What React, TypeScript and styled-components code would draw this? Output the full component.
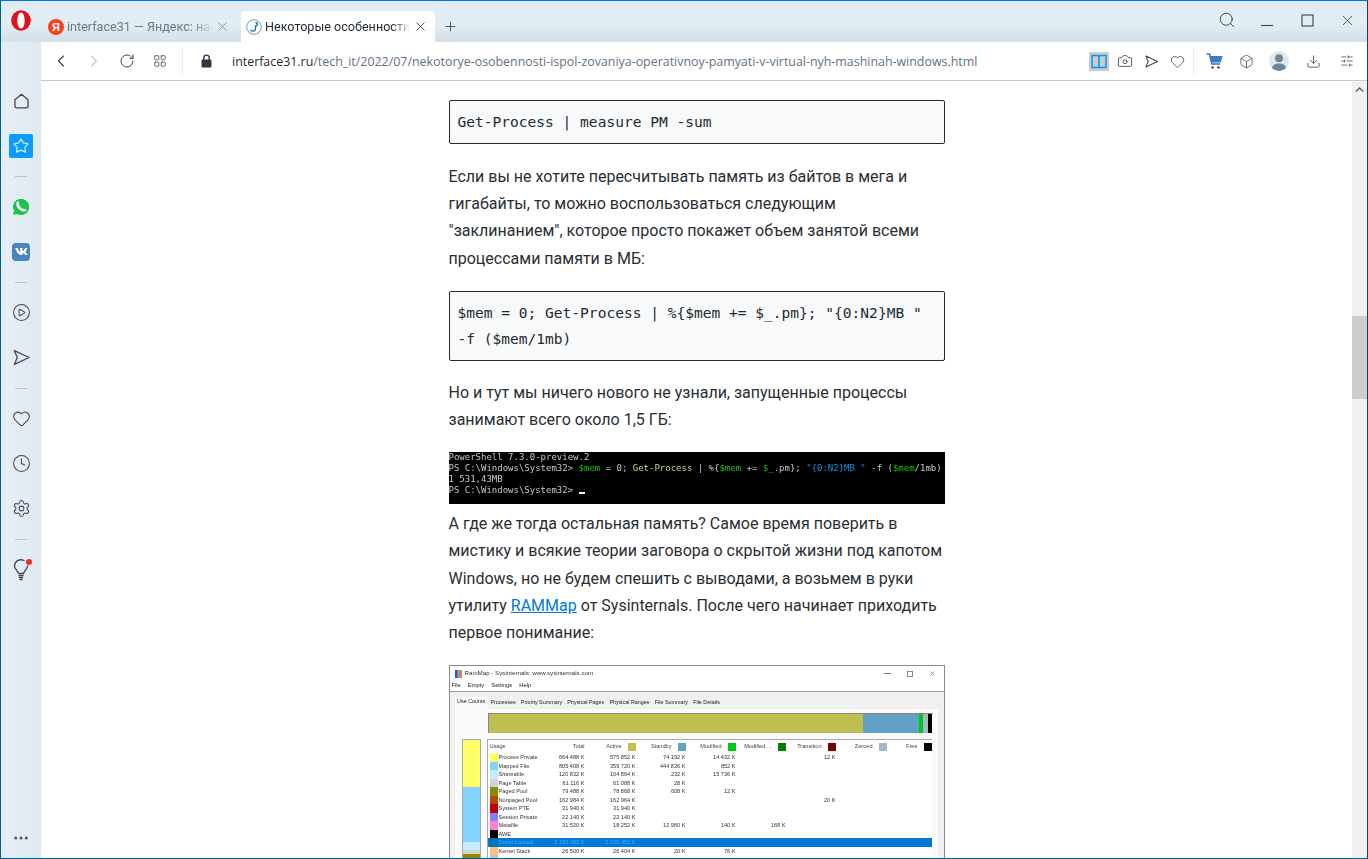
import React from 'react';
import styled, { createGlobalStyle } from 'styled-components';
import { ChevronLeft, ChevronRight, RotateCw, LayoutGrid, Camera, Heart, Box, Download, SlidersHorizontal, Search, X, Plus, Clock, Settings, CirclePlay, ChevronUp, MoreHorizontal } from 'lucide-react';
import { FaVk } from 'react-icons/fa';

const Global = createGlobalStyle`
  html, body { margin: 0; padding: 0; height: 100%; overflow: hidden; background: #fff; }
  * { box-sizing: border-box; }
`;

const Frame = styled.div`
  width: 1368px; height: 859px;
  display: flex; flex-direction: column;
  border: 1px solid #00628a; border-top: 1px solid #0078d7; border-right-color: #004a70;
  font-family: "Open Sans", "Noto Sans", sans-serif;
  background: #e3edf4;
  overflow: hidden;
`;
const TitleBar = styled.div`
  height: 41px; flex: none; display: flex; align-items: flex-end;
  background: linear-gradient(#dfeaf3, #e3edf4 55%, #d3e0ea);
`;
const LogoCell = styled.div`
  width: 44px; height: 41px; flex: none; display: flex; justify-content: center; padding: 9px 4px 0 0;
`;
const Tab = styled.div<{ $active?: boolean }>`
  width: ${p => (p.$active ? 194 : 192)}px; height: 31px; flex: none;
  margin-right: 4px; padding: 0 7px 0 ${p => (p.$active ? 5 : 3)}px;
  display: flex; align-items: center; gap: 3px;
  background: ${p => (p.$active ? '#fff' : 'transparent')};
  border-radius: 3px 3px 0 0;
  color: ${p => (p.$active ? '#1f2a35' : '#6c7a86')};
  font-family: Roboto, "Open Sans", sans-serif;
  font-size: 12.6px;
`;
const TabLabel = styled.span`
  flex: 1; white-space: nowrap; overflow: hidden;
  mask-image: linear-gradient(90deg, #000 88%, transparent);
`;
const TabClose = styled(X)<{ $active?: boolean }>`
  flex: none; color: ${p => (p.$active ? '#3c4650' : '#7d8a95')};
`;
const NewTab = styled.div`
  width: 26px; height: 31px; display: flex; align-items: center; justify-content: center; color: #333e48; margin-left: -2px;
`;
const WindowControls = styled.div`
  margin-left: auto; display: flex; height: 41px;
`;
const WindowControl = styled.div`
  width: 40px; display: flex; align-items: center; justify-content: center; color: #3a444e; padding-bottom: 3px;
`;
const Body = styled.div`
  flex: 1; min-height: 0; display: flex;
`;
const Sidebar = styled.nav`
  width: 40px; flex: none; display: flex; flex-direction: column; align-items: center;
  padding-top: 36px; color: #3e4a55; background: linear-gradient(90deg, #e6eff6, #dfe9f1);
`;
const SideItem = styled.div`
  height: 45px; flex: none; width: 100%; display: flex; align-items: center; justify-content: center; position: relative;
`;
const SideRule = styled.div<{ $h: number }>`
  width: 12px; height: ${p => p.$h}px; flex: none; display: flex; align-items: center;
  &::before { content: ""; width: 100%; height: 1px; background: #b4c4d0; }
`;
const StarTile = styled.div`
  width: 24px; height: 24px; border-radius: 2px; background: #0a9cff; display: flex; align-items: center; justify-content: center;
`;
const VkTile = styled.div`
  width: 18px; height: 18px; border-radius: 4px; background: #4a86bb; color: #fff; display: flex; align-items: center; justify-content: center;
`;
const RedDot = styled.span`
  position: absolute; top: 12px; left: 25px; width: 6px; height: 6px; border-radius: 50%; background: #f5282d;
`;
const SideFoot = styled.div`
  margin-top: auto; height: 40px; display: flex; align-items: center; color: #4b5763;
`;
const Main = styled.div`
  flex: 1; min-width: 0; display: flex; flex-direction: column;
`;
const AddressBar = styled.div`
  height: 39px; flex: none; display: flex; align-items: center; background: #fff;
  border-bottom: 1px solid #b9ccd9; padding: 0 4px 0 3px;
`;
const BarIcon = styled.div<{ $w?: number; $muted?: boolean }>`
  width: ${p => p.$w ?? 33}px; height: 30px; flex: none; display: flex; align-items: center; justify-content: center;
  color: ${p => (p.$muted ? '#c3c9ce' : '#3b4650')};
`;
const BarRule = styled.div`
  width: 1px; height: 28px; background: #e6ebef; flex: none; margin: 0 6px;
`;
const ToolRule = styled(BarRule)`
  margin: 0 4px 0 3px;
`;
const Url = styled.div`
  font-size: 12.42px; white-space: nowrap; color: #5f7385; margin-left: 8px;
  b { font-weight: 400; color: #1f2a35; }
`;
const RightTools = styled.div`
  margin-left: auto; display: flex; align-items: center;
`;
const ReaderButton = styled.div`
  width: 20px; height: 19px; background: #ccc; display: flex; align-items: center; justify-content: center; color: #0095ff; margin-right: 3px;
`;
const Viewport = styled.div`
  flex: 1; min-height: 0; display: flex; background: #fff;
`;
const PageArea = styled.div`
  flex: 1; min-width: 0; overflow: hidden; display: flex; justify-content: center; padding-top: 19px;
`;
const Article = styled.article`
  width: 496px; flex: none; color: #2a2e33;
  font-family: Roboto, "Liberation Sans", sans-serif; font-size: 16px; line-height: 27.2px;
`;
const Code = styled.pre<{ $gap?: number }>`
  margin: 0 0 ${p => p.$gap ?? 19}px; padding: 8px; background: #f8f9fa;
  border: 1px solid #2a2a2a; border-radius: 2px;
  font-family: "DejaVu Sans Mono", monospace; font-size: 14.55px; line-height: 26px; color: #24292e;
  white-space: pre-wrap;
`;
const Para = styled.p<{ $gap?: number }>`
  margin: 0 0 ${p => p.$gap ?? 19}px;
  a { color: #0078d7; text-decoration: underline; }
`;
const Console = styled.div`
  height: 52px; background: #000; color: #c8c8c8; margin-bottom: 6px; overflow: hidden;
  font-family: "DejaVu Sans Mono", monospace; font-size: 9px; line-height: 11px; white-space: pre;
  filter: blur(0.5px);
`;
const Tok = styled.span<{ $c: string }>` color: ${p => p.$c}; `;
const Caret = styled.span`
  display: inline-block; width: 6px; height: 2px; background: #fff; vertical-align: -1px;
`;
const RamWindow = styled.div`
  height: 300px; background: #fff; border: 1px solid #8a8a8a; font-family: "Liberation Sans", sans-serif;
  font-size: 5.6px; line-height: 8.5px; color: #222; filter: blur(0.3px); overflow: hidden;
`;
const RamTitle = styled.div`
  height: 15px; display: flex; align-items: center; padding: 0 8px 0 5px; gap: 3px; font-size: 6.2px; color: #333;
`;
const RamLogo = styled.div`
  width: 7px; height: 8px; background: linear-gradient(90deg, #3050d0 25%, #ff40a0 25% 50%, #30c0d0 50% 75%, #f08020 75%);
`;
const RamControls = styled.div`
  margin-left: auto; display: flex; gap: 16px; align-items: center; color: #666;
`;
const RamMinGlyph = styled.span`
  width: 7px; height: 1px; background: #777; display: block;
`;
const RamMaxGlyph = styled.span`
  width: 6px; height: 6px; border: 1px solid #888; display: block;
`;
const RamMenu = styled.div`
  height: 10px; display: flex; gap: 7px; padding: 0 1px 0 2px; font-size: 5.8px; border-bottom: 1px solid #999; box-sizing: content-box;
`;
const RamBody = styled.div`
  background: #f0f0f0; padding: 5px 6px 0 5px; height: 270px;
`;
const RamTabs = styled.div`
  display: flex; height: 12px; align-items: flex-end; font-size: 5.4px;
`;
const RamTab = styled.div<{ $on?: boolean }>`
  padding: 0 2.6px; height: ${p => (p.$on ? 12 : 10)}px; line-height: ${p => (p.$on ? 9 : 7)}px; background: ${p => (p.$on ? '#fafafa' : '#f0f0f0')};
`;
const RamPanel = styled.div`
  background: #fafafa; height: 250px; padding: 4px 5px 0 7px;
`;
const UsageBar = styled.div`
  height: 20px; margin-left: 26px; display: flex; border: 1px solid #888; border-width: 1px 0 0 1px;
`;
const UsagePart = styled.div<{ $c: string; $w: number }>`
  width: ${p => p.$w}px; flex: none; background: ${p => p.$c};
`;
const RamSplit = styled.div`
  display: flex; margin-top: 6px; gap: 6px; align-items: flex-start;
`;
const StackBar = styled.div`
  width: 19px; flex: none; border: 1px solid #aaa; display: flex; flex-direction: column;
`;
const StackPart = styled.div<{ $c: string; $h: number }>`
  height: ${p => p.$h}px; background: ${p => p.$c};
`;
const RamList = styled.div`
  width: 445px; flex: none; background: #fff; border-top: 1px solid #aaa; border-left: 1px solid #aaa;
`;
const cols = '58px 37px 51px 50px 50px 50px 50px 51px 45px';
const HeadRow = styled.div`
  display: grid; grid-template-columns: ${cols}; height: 13px; align-items: center; padding-left: 2px; color: #444;
`;
const HeadCell = styled.div<{ $left?: boolean }>`
  display: flex; justify-content: ${p => (p.$left ? 'flex-start' : 'flex-end')}; align-items: center; gap: 6px; white-space: nowrap;
`;
const HeadSwatch = styled.span<{ $c: string }>`
  width: 8px; height: 8px; background: ${p => p.$c}; flex: none;
`;
const Row = styled.div<{ $sel?: boolean }>`
  display: grid; grid-template-columns: ${cols}; height: 8.5px; padding-left: 2px;
  background: ${p => (p.$sel ? '#0078d7' : 'transparent')};
  color: ${p => (p.$sel ? '#3fb0f5' : '#333')};
`;
const NameCell = styled.div`
  display: flex; gap: 1px; white-space: nowrap;
`;
const RowSwatch = styled.span<{ $c: string }>`
  width: 8px; height: 8.5px; background: ${p => p.$c}; flex: none;
`;
const NumCell = styled.div`
  text-align: right; white-space: nowrap;
`;
const PageScroll = styled.div`
  width: 15px; flex: none; background: #f0f0f0; display: flex; flex-direction: column; align-items: center;
`;
const ScrollArrow = styled.div`
  height: 16px; width: 15px; display: flex; align-items: center; justify-content: center; color: #505050;
`;
const ScrollThumb = styled.div`
  width: 15px; height: 83px; background: #cdcdcd; margin-top: 219px;
`;
const Avatar = styled.div`
  width: 20px; height: 20px; border-radius: 50%; background: #dfe8ee; overflow: hidden; color: #6e8797;
  display: flex; align-items: center; justify-content: center;
`;

const SendIcon = ({ size = 16 }: { size?: number }) => (
  <svg width={size} height={size} viewBox="0 0 20 20" fill="none" stroke="currentColor" strokeWidth="1.4" strokeLinejoin="round">
    <path d="M2.5 2.8 L18 10 L2.5 17.2 L5.6 10 Z" />
  </svg>
);
const StarIcon = () => (
  <svg width="18" height="18" viewBox="0 0 20 20" fill="none" stroke="#c9f0ff" strokeWidth="1.4" strokeLinejoin="round">
    <path d="M10 2.2 L12.6 6.6 L17.8 7.7 L14.3 11.5 L14.9 16.8 L10 14.6 L5.1 16.8 L5.7 11.5 L2.2 7.7 L7.4 6.6 Z" />
  </svg>
);
const HomeIcon = () => (
  <svg width="15" height="16" viewBox="0 0 16 17" fill="none" stroke="currentColor" strokeWidth="1.4" strokeLinejoin="round">
    <path d="M8 1.2 L14.4 6.6 Q15 7.1 15 8 V13.8 Q15 15.8 13 15.8 H3 Q1 15.8 1 13.8 V8 Q1 7.1 1.6 6.6 Z" />
  </svg>
);
const WhatsappIcon = () => (
  <svg width="20" height="20" viewBox="0 0 20 20">
    <path d="M1.2 18.8 L2.5 14 A8.6 8.6 0 1 1 6 17.5 Z" fill="#1fc34b" stroke="#f4fbf6" strokeWidth="1" strokeLinejoin="round" />
    <path d="M6.8 5.8 C5.8 9.5 10 14 14 13.2" fill="none" stroke="#fff" strokeWidth="2.6" strokeLinecap="round" />
  </svg>
);
const OperaLogo = () => (
  <svg width="20" height="21" viewBox="0 0 20 21">
    <ellipse cx="10" cy="10.5" rx="9.8" ry="10.3" fill="#e0101c" />
    <ellipse cx="10" cy="10.5" rx="3.7" ry="8" fill="#fff" />
  </svg>
);
const YandexIcon = () => (
  <svg width="16" height="16" viewBox="0 0 16 16">
    <circle cx="8" cy="8" r="8" fill="#fc3f1d" />
    <text x="8" y="12" fontSize="11" fontWeight="700" fontFamily="Liberation Sans" textAnchor="middle" fill="#fff">Я</text>
  </svg>
);
const SiteIcon = () => (
  <svg width="16" height="16" viewBox="0 0 16 16" fill="none">
    <circle cx="8" cy="8" r="7.3" stroke="#6d99b5" strokeWidth="1" />
    <path d="M9.5 3.5 C12 3.5 12 7 9.5 7 L9.5 9.5 C9.5 12.5 6 12.8 4.5 11" stroke="#2a6d9a" strokeWidth="1.4" />
  </svg>
);
const BookIcon = () => (
  <svg width="16" height="15" viewBox="0 0 16 15" fill="none" stroke="currentColor" strokeWidth="1.5">
    <path d="M1 1.5 H6.5 Q8 1.5 8 3 V13.5 H1 Z M15 1.5 H9.5 Q8 1.5 8 3 V13.5 H15 Z" />
  </svg>
);
const BulbIcon = () => (
  <svg width="16" height="22" viewBox="0 0 16 22" fill="none" stroke="currentColor" strokeWidth="1.3" strokeLinecap="round">
    <path d="M5.5 14.5 C5 11.5 1.5 10.5 1.5 7 A6.5 6.3 0 0 1 11 1.5 M14.5 7 C14.5 10.5 11 11.5 10.5 14.5 H5.5" />
    <path d="M6 16.5 H10 M6.3 18.5 H9.7 M7 20.5 H9" />
  </svg>
);
const PersonIcon = () => (
  <svg width="20" height="20" viewBox="0 0 20 20" fill="currentColor">
    <circle cx="10" cy="7.3" r="4" />
    <path d="M2.5 20 C2.5 14 6 12.5 10 12.5 C14 12.5 17.5 14 17.5 20 Z" />
  </svg>
);
const LockIcon = () => (
  <svg width="11" height="14" viewBox="0 0 11 14">
    <path d="M2.8 6 V3.8 A2.7 2.7 0 0 1 8.2 3.8 V6" fill="none" stroke="#2e3a46" strokeWidth="1.4" />
    <rect x="0.5" y="5.5" width="10" height="8" rx="1.2" fill="#2e3a46" />
  </svg>
);
const CartIcon = () => (
  <svg width="17" height="16" viewBox="0 0 17 16">
    <path d="M0.5 1 H3.5 L6 11 H14" fill="none" stroke="#2f75c4" strokeWidth="1.6" />
    <path d="M4.2 3 H16.6 L14.6 9.4 H5.8 Z" fill="#3a7cc8" />
    <circle cx="6.5" cy="14.4" r="1.2" fill="#333e48" />
    <circle cx="12.5" cy="14.4" r="1.2" fill="#333e48" />
  </svg>
);
const MinimizeIcon = () => (
  <svg width="14" height="14" viewBox="0 0 14 14" stroke="currentColor" strokeWidth="1.1"><path d="M1 12.5 H13" /></svg>
);
const MaximizeIcon = () => (
  <svg width="13" height="13" viewBox="0 0 13 13" fill="none" stroke="currentColor" strokeWidth="1.1"><rect x="1" y="1" width="11" height="11" /></svg>
);

const ramRows: [string, string, string[]][] = [
  ['#ffff66', 'Process Private', ['664 488 K', '575 852 K', '74 192 K', '14 432 K', '', '12 K']],
  ['#80d4ff', 'Mapped File', ['805 408 K', '359 720 K', '444 836 K', '852 K']],
  ['#c8eaff', 'Shareable', ['120 832 K', '104 864 K', '232 K', '15 736 K']],
  ['#d3d3d3', 'Page Table', ['61 116 K', '61 088 K', '28 K']],
  ['#8b8b00', 'Paged Pool', ['79 488 K', '78 868 K', '608 K', '12 K']],
  ['#b84a00', 'Nonpaged Pool', ['162 984 K', '162 964 K', '', '', '', '20 K']],
  ['#c00000', 'System PTE', ['31 940 K', '31 940 K']],
  ['#8080ff', 'Session Private', ['22 140 K', '22 140 K']],
  ['#ff80d0', 'Metafile', ['31 520 K', '18 252 K', '12 960 K', '140 K', '168 K']],
  ['#000000', 'AWE', []],
  ['#0070b8', 'Driver Locked', ['2 100 492 K', '2 100 452 K']],
  ['#ffc080', 'Kernel Stack', ['26 500 K', '26 404 K', '20 K', '76 K']],
  ['#c0c0c0', '', []],
];
const heads: [string, string | null][] = [
  ['Total', null], ['Active', '#bfbf4f'], ['Standby', '#62a0c4'], ['Modified', '#00c816'],
  ['Modified ...', '#008000'], ['Transition', '#800000'], ['Zeroed', '#a4b8c8'], ['Free', '#000'],
];
const ramTabs = ['Processes', 'Priority Summary', 'Physical Pages', 'Physical Ranges', 'File Summary', 'File Details'];

export default function App() {
  return (
    <Frame>
      <Global />
      <TitleBar>
        <LogoCell><OperaLogo /></LogoCell>
        <Tab>
          <YandexIcon />
          <TabLabel>interface31 — Яндекс: наш свет</TabLabel>
          <TabClose size={15} strokeWidth={1.3} />
        </Tab>
        <Tab $active>
          <SiteIcon />
          <TabLabel>Некоторые особенности использования</TabLabel>
          <TabClose $active size={15} strokeWidth={1.4} />
        </Tab>
        <NewTab><Plus size={15} strokeWidth={1.3} /></NewTab>
        <WindowControls>
          <WindowControl><Search size={18} strokeWidth={1.3} /></WindowControl>
          <WindowControl><MinimizeIcon /></WindowControl>
          <WindowControl><MaximizeIcon /></WindowControl>
          <WindowControl><X size={17} strokeWidth={1.2} /></WindowControl>
        </WindowControls>
      </TitleBar>
      <Body>
        <Sidebar>
          <SideItem><HomeIcon /></SideItem>
          <SideItem><StarTile><StarIcon /></StarTile></SideItem>
          <SideRule $h={16} />
          <SideItem><WhatsappIcon /></SideItem>
          <SideItem><VkTile><FaVk size={13} /></VkTile></SideItem>
          <SideRule $h={16} />
          <SideItem><CirclePlay size={19} strokeWidth={1.3} /></SideItem>
          <SideItem><SendIcon size={19} /></SideItem>
          <SideRule $h={16} />
          <SideItem><Heart size={19} strokeWidth={1.3} /></SideItem>
          <SideItem><Clock size={19} strokeWidth={1.3} /></SideItem>
          <SideItem><Settings size={19} strokeWidth={1.3} /></SideItem>
          <SideRule $h={16} />
          <SideItem><BulbIcon /><RedDot /></SideItem>
          <SideFoot><MoreHorizontal size={18} strokeWidth={2} /></SideFoot>
        </Sidebar>
        <Main>
          <AddressBar>
            <BarIcon><ChevronLeft size={20} strokeWidth={1.4} /></BarIcon>
            <BarIcon $muted><ChevronRight size={20} strokeWidth={1.4} /></BarIcon>
            <BarIcon><RotateCw size={16} strokeWidth={1.5} /></BarIcon>
            <BarIcon><LayoutGrid size={14} strokeWidth={1.3} /></BarIcon>
            <BarRule />
            <BarIcon $w={35}><LockIcon /></BarIcon>
            <Url><b>interface31.ru</b>/tech_it/2022/07/nekotorye-osobennosti-ispol-zovaniya-operativnoy-pamyati-v-virtual-nyh-mashinah-windows.html</Url>
            <RightTools>
              <ReaderButton><BookIcon /></ReaderButton>
              <BarIcon $w={26}><Camera size={16} strokeWidth={1.3} /></BarIcon>
              <BarIcon $w={26}><SendIcon size={15} /></BarIcon>
              <BarIcon $w={26}><Heart size={15} strokeWidth={1.3} /></BarIcon>
              <ToolRule />
              <BarIcon $w={33}><CartIcon /></BarIcon>
              <BarIcon $w={30}><Box size={15} strokeWidth={1.2} /></BarIcon>
              <BarIcon $w={36}><Avatar><PersonIcon /></Avatar></BarIcon>
              <BarIcon $w={33}><Download size={15} strokeWidth={1.3} /></BarIcon>
              <BarIcon $w={33}><SlidersHorizontal size={14} strokeWidth={1.3} /></BarIcon>
            </RightTools>
          </AddressBar>
          <Viewport>
            <PageArea>
              <Article>
                <Code>Get-Process | measure PM -sum</Code>
                <Para>Если вы не хотите пересчитывать память из байтов в мега и гигабайты, то можно воспользоваться следующим "заклинанием", которое просто покажет объем занятой всеми процессами памяти в МБ:</Para>
                <Code $gap={18}>{'$mem = 0; Get-Process | %{$mem += $_.pm}; "{0:N2}MB " -f ($mem/1mb)'}</Code>
                <Para>Но и тут мы ничего нового не узнали, запущенные процессы занимают всего около 1,5 ГБ:</Para>
                <Console>
                  {'PowerShell 7.3.0-preview.2\nPS C:\\Windows\\System32> '}
                  <Tok $c="#16c60c">$mem</Tok>{' = 0; '}<Tok $c="#d8d080">Get-Process</Tok>{' | %{'}<Tok $c="#16c60c">$mem</Tok>{' += '}<Tok $c="#16c60c">$_</Tok>{'.pm}; '}<Tok $c="#1090e0">{'"{0:N2}MB "'}</Tok>{' -f ('}<Tok $c="#16c60c">$mem</Tok>{'/1mb)\n1 531,43MB\nPS C:\\Windows\\System32> '}<Caret />
                </Console>
                <Para>А где же тогда остальная память? Самое время поверить в мистику и всякие теории заговора о скрытой жизни под капотом Windows, но не будем спешить с выводами, а возьмем в руки утилиту <a href="#r">RAMMap</a> от Sysinternals. После чего начинает приходить первое понимание:</Para>
                <RamWindow>
                  <RamTitle>
                    <RamLogo />RamMap - Sysinternals: www.sysinternals.com
                    <RamControls><RamMinGlyph /><RamMaxGlyph /><X size={7} /></RamControls>
                  </RamTitle>
                  <RamMenu><span>File</span><span>Empty</span><span>Settings</span><span>Help</span></RamMenu>
                  <RamBody>
                    <RamTabs>
                      <RamTab $on>Use Counts</RamTab>
                      {ramTabs.map(t => <RamTab key={t}>{t}</RamTab>)}
                    </RamTabs>
                    <RamPanel>
                      <UsageBar>
                        <UsagePart $c="#bfbf4f" $w={374} />
                        <UsagePart $c="#62a0c4" $w={56} />
                        <UsagePart $c="#00c816" $w={4} />
                        <UsagePart $c="#a4b8c8" $w={5} />
                        <UsagePart $c="#000" $w={4} />
                      </UsageBar>
                      <RamSplit>
                        <StackBar>
                          <StackPart $c="#ffff66" $h={47} />
                          <StackPart $c="#80d4ff" $h={55} />
                          <StackPart $c="#c8eaff" $h={8} />
                          <StackPart $c="#d3d3d3" $h={4} />
                          <StackPart $c="#8b8b00" $h={8} />
                        </StackBar>
                        <RamList>
                          <HeadRow>
                            <HeadCell $left>Usage</HeadCell>
                            {heads.map(([n, c]) => (
                              <HeadCell key={n}>{n}{c && <HeadSwatch $c={c} />}</HeadCell>
                            ))}
                          </HeadRow>
                          {ramRows.map(([c, name, nums]) => (
                            <Row key={c} $sel={name === 'Driver Locked'}>
                              <NameCell><RowSwatch $c={c} />{name}</NameCell>
                              {nums.map((n, i) => <NumCell key={i}>{n}</NumCell>)}
                            </Row>
                          ))}
                        </RamList>
                      </RamSplit>
                    </RamPanel>
                  </RamBody>
                </RamWindow>
              </Article>
            </PageArea>
            <PageScroll>
              <ScrollArrow><ChevronUp size={13} strokeWidth={2.6} /></ScrollArrow>
              <ScrollThumb />
            </PageScroll>
          </Viewport>
        </Main>
      </Body>
    </Frame>
  );
}
